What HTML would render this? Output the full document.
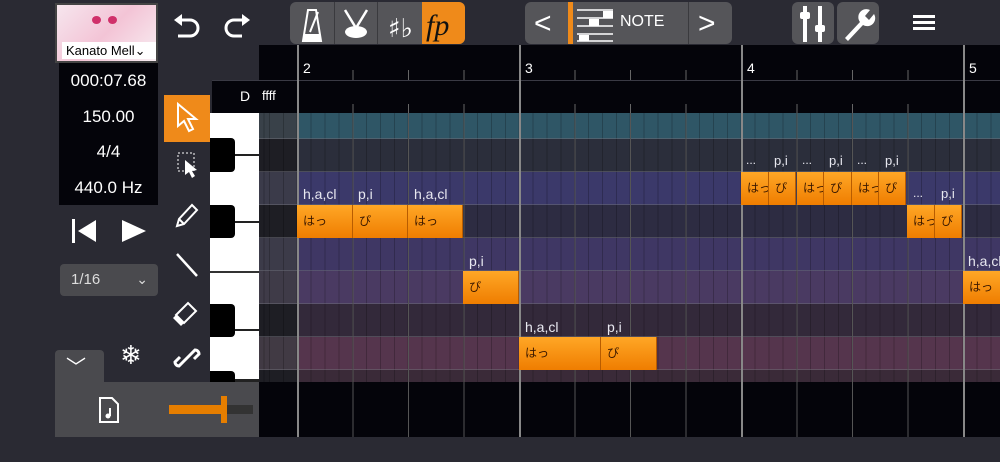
<!DOCTYPE html>
<html><head><meta charset="utf-8"><style>
*{margin:0;padding:0;box-sizing:border-box}
body{width:1000px;height:462px;background:#2a2a33;position:relative;overflow:hidden;font-family:"Liberation Sans","Noto Sans CJK JP",sans-serif;color:#fff}
.a{position:absolute}
.row{position:absolute;left:259px;width:741px}
.n{position:absolute;height:33px;background:linear-gradient(#ffa726,#ef7d00);border-right:1px solid #b85c00;color:#3a1800;font-size:12px;line-height:33px;padding-left:6px;white-space:nowrap;overflow:hidden}
.l{position:absolute;font-size:14px;color:#e8e8f0}
.btn{position:absolute;background:#555559;border-radius:6px}
</style></head><body>
<!-- ruler -->
<div class="a" style="left:259px;top:45px;width:741px;height:68px;background:#04040a"></div>
<div class="a" style="left:212px;top:80px;width:788px;height:1px;background:#3a3a44"></div>
<div class="a" style="left:212px;top:80px;width:1px;height:33px;background:#3a3a44"></div>
<div class="a" style="left:212px;top:81px;width:47px;height:32px;background:#04040a"></div>
<div class="a" style="left:240px;top:88px;font-size:14px">D</div>
<div class="a" style="left:262px;top:88px;font-size:13px">ffff</div>
<div class="a" style="left:297px;top:70px;width:703px;height:10px;background:repeating-linear-gradient(90deg,#666 0 1px,transparent 1px 55.5px)"></div>
<div class="a" style="left:297px;top:104px;width:703px;height:9px;background:repeating-linear-gradient(90deg,#666 0 1px,transparent 1px 55.5px)"></div>
<div class="a" style="left:303px;top:60px;font-size:14px">2</div>
<div class="a" style="left:525px;top:60px;font-size:14px">3</div>
<div class="a" style="left:747px;top:60px;font-size:14px">4</div>
<div class="a" style="left:969px;top:60px;font-size:14px">5</div>
<!-- rows -->
<div class="row" style="top:113px;height:26px;background:#2f5666"></div>
<div class="row" style="top:139px;height:33px;background:#2b2e3b"></div>
<div class="row" style="top:172px;height:33px;background:#3b396a"></div>
<div class="row" style="top:205px;height:33px;background:#2d2c42"></div>
<div class="row" style="top:238px;height:33px;background:#3f3764"></div>
<div class="row" style="top:271px;height:33px;background:#4a3a62"></div>
<div class="row" style="top:304px;height:33px;background:#33293a"></div>
<div class="row" style="top:337px;height:33px;background:#55354d"></div>
<div class="row" style="top:370px;height:12px;background:#3a2a38"></div>
<!-- left gray strip -->
<div class="a" style="left:259px;top:113px;width:38px;height:269px;background:rgba(60,60,66,.8)"></div>
<div class="a" style="left:259px;top:139px;width:38px;height:33px;background:#1e1e24"></div>
<div class="a" style="left:259px;top:205px;width:38px;height:33px;background:#1e1e24"></div>
<div class="a" style="left:259px;top:304px;width:38px;height:33px;background:#1e1e24"></div>
<div class="a" style="left:259px;top:370px;width:38px;height:12px;background:#1e1e24"></div>
<!-- grid lines -->
<div class="a" style="left:259px;top:113px;width:741px;height:269px;background:repeating-linear-gradient(90deg,rgba(0,0,0,.22) 0 1px,transparent 1px 13.875px);background-position:10px 0"></div>
<div class="a" style="left:259px;top:138px;width:741px;height:244px;background:repeating-linear-gradient(180deg,rgba(110,110,120,.5) 0 1px,transparent 1px 33px)"></div>
<div class="a" style="left:297px;top:113px;width:703px;height:269px;background:repeating-linear-gradient(90deg,#555 0 1px,transparent 1px 55.5px)"></div>
<!-- black bottom -->
<div class="a" style="left:259px;top:382px;width:741px;height:55px;background:#04040a"></div>
<div class="a" style="left:297px;top:382px;width:703px;height:55px;background:repeating-linear-gradient(90deg,#555 0 1px,transparent 1px 55.5px)"></div>
<div class="a" style="left:297px;top:45px;width:703px;height:392px;background:repeating-linear-gradient(90deg,#888 0 2px,transparent 2px 222px)"></div>
<!-- piano -->
<div class="a" style="left:210px;top:113px;width:49px;height:269px;background:#fff"></div>
<div class="a" style="left:210px;top:154px;width:49px;height:2px;background:#222"></div>
<div class="a" style="left:210px;top:221px;width:49px;height:2px;background:#222"></div>
<div class="a" style="left:210px;top:271px;width:49px;height:2px;background:#333"></div>
<div class="a" style="left:210px;top:329px;width:49px;height:2px;background:#222"></div>
<div class="a" style="left:210px;top:379px;width:49px;height:3px;background:#222"></div>
<div class="a" style="left:210px;top:138px;width:25px;height:34px;background:#000;border-radius:0 4px 4px 0"></div>
<div class="a" style="left:210px;top:205px;width:25px;height:33px;background:#000;border-radius:0 4px 4px 0"></div>
<div class="a" style="left:210px;top:304px;width:25px;height:33px;background:#000;border-radius:0 4px 4px 0"></div>
<div class="a" style="left:210px;top:371px;width:25px;height:11px;background:#000;border-radius:0 4px 0 0"></div>
<!-- notes -->
<div class="l" style="left:303px;top:186px">h,a,cl</div><div class="l" style="left:358px;top:186px">p,i</div><div class="l" style="left:414px;top:186px">h,a,cl</div>
<div class="n" style="left:297px;top:205px;width:56px">はっ</div><div class="n" style="left:353px;top:205px;width:55px">ぴ</div><div class="n" style="left:408px;top:205px;width:55px">はっ</div>
<div class="l" style="left:469px;top:253px">p,i</div>
<div class="n" style="left:463px;top:271px;width:56px">ぴ</div>
<div class="l" style="left:525px;top:319px">h,a,cl</div><div class="l" style="left:607px;top:319px">p,i</div>
<div class="n" style="left:519px;top:337px;width:82px">はっ</div><div class="n" style="left:601px;top:337px;width:56px">ぴ</div>
<div class="l" style="left:746px;top:153px;font-size:12px">...</div><div class="l" style="left:774px;top:153px;font-size:13px">p,i</div>
<div class="l" style="left:802px;top:153px;font-size:12px">...</div><div class="l" style="left:829px;top:153px;font-size:13px">p,i</div>
<div class="l" style="left:857px;top:153px;font-size:12px">...</div><div class="l" style="left:885px;top:153px;font-size:13px">p,i</div>
<div class="n" style="left:741px;top:172px;width:28px">はっ</div><div class="n" style="left:769px;top:172px;width:27px">ぴ</div>
<div class="n" style="left:797px;top:172px;width:27px">はっ</div><div class="n" style="left:824px;top:172px;width:28px">ぴ</div>
<div class="n" style="left:852px;top:172px;width:27px">はっ</div><div class="n" style="left:879px;top:172px;width:27px">ぴ</div>
<div class="l" style="left:913px;top:186px;font-size:12px">...</div><div class="l" style="left:941px;top:186px;font-size:13px">p,i</div>
<div class="n" style="left:907px;top:205px;width:28px">はっ</div><div class="n" style="left:935px;top:205px;width:27px">ぴ</div>
<div class="l" style="left:968px;top:253px">h,a,cl</div>
<div class="n" style="left:963px;top:271px;width:40px">はっ</div>
<!-- left panel -->
<div class="a" style="left:55px;top:3px;width:103px;height:60px;border:2px solid #444;background:linear-gradient(135deg,#f6e6ee,#f3c4d6 50%,#f8eef2)"></div>
<div class="a" style="left:90px;top:14px;width:30px;height:16px"><span style="position:absolute;left:2px;top:2px;width:9px;height:8px;border-radius:50%;background:#d0306a"></span><span style="position:absolute;left:18px;top:2px;width:9px;height:8px;border-radius:50%;background:#d0306a"></span></div>
<div class="a" style="left:62px;top:42px;width:94px;height:17px;background:#fff;color:#000;font-size:13px;line-height:17px;padding-left:4px">Kanato Mell⌄</div>
<div class="a" style="left:59px;top:63px;width:99px;height:142px;background:#04040a;font-size:17px;text-align:center;line-height:35.5px">000:07.68<br>150.00<br>4/4<br>440.0 Hz</div>
<svg class="a" style="left:70px;top:217px" width="80" height="28"><rect x="2" y="2" width="3" height="24" fill="#fff"/><polygon points="26,3 26,25 8,14" fill="#fff"/><polygon points="52,3 52,25 76,14" fill="#fff"/></svg>
<div class="a" style="left:60px;top:264px;width:98px;height:32px;background:#4a4a4e;border-radius:4px;font-size:15px;line-height:32px;padding-left:11px;color:#ddd">1/16<span style="position:absolute;right:10px;top:-1px;font-size:14px">⌄</span></div>
<!-- tools -->
<div class="a" style="left:164px;top:95px;width:46px;height:47px;background:#ef8a1a"></div>
<svg class="a" style="left:164px;top:95px" width="46" height="47"><path d="M14 9 L14 31 L20 26 L25 36 L29 34 L24 24 L32 24 Z" fill="none" stroke="#fff" stroke-width="2"/></svg>
<svg class="a" style="left:164px;top:145px" width="46" height="40"><rect x="14" y="8" width="16" height="18" fill="none" stroke="#fff" stroke-dasharray="2 2"/><path d="M21 15 L21 30 L25 27 L28 33 L31 31 L28 26 L33 25 Z" fill="#fff"/></svg>
<svg class="a" style="left:164px;top:195px" width="46" height="40"><path d="M13 31 L15 24 L28 10 L33 15 L20 29 Z M15 24 L20 29" fill="none" stroke="#fff" stroke-width="2"/></svg>
<svg class="a" style="left:164px;top:245px" width="46" height="40"><line x1="13" y1="9" x2="33" y2="31" stroke="#fff" stroke-width="2.5"/></svg>
<svg class="a" style="left:164px;top:295px" width="46" height="40"><path d="M12 20 L24 8 L32 16 L20 28 Z" fill="none" stroke="#fff" stroke-width="2"/><path d="M12 20 L20 28 L17 31 L9 23Z" fill="#fff"/></svg>
<div class="a" style="left:120px;top:340px;font-size:26px">❄</div>
<svg class="a" style="left:172px;top:343px" width="30" height="30"><path d="M12 18 L7 23 A4 4 0 0 1 3 19 L8 14 M18 12 L23 7 A4 4 0 0 1 27 11 L22 16 M11 19 L19 11" fill="none" stroke="#fff" stroke-width="3"/></svg>
<!-- bottom panel -->
<div class="a" style="left:55px;top:350px;width:49px;height:35px;background:#4a4a4e;border-radius:4px 4px 0 0"></div>
<div class="a" style="left:66px;top:351px;font-size:20px;color:#fff">﹀</div>
<div class="a" style="left:55px;top:382px;width:204px;height:55px;background:#4a4a4e"></div>
<svg class="a" style="left:98px;top:396px" width="22" height="28"><path d="M2 2 H14 L20 8 V26 H2 Z" fill="none" stroke="#fff" stroke-width="2"/><circle cx="10" cy="20" r="2.5" fill="#fff"/><line x1="12" y1="20" x2="12" y2="12" stroke="#fff" stroke-width="2"/></svg>
<div class="a" style="left:169px;top:405px;width:56px;height:9px;background:#e67e00"></div>
<div class="a" style="left:225px;top:405px;width:28px;height:9px;background:#333"></div>
<div class="a" style="left:221px;top:396px;width:6px;height:27px;background:#e67e00"></div>
<!-- top toolbar -->
<svg class="a" style="left:170px;top:10px" width="80" height="30"><path d="M8 10 H20 A8 8 0 0 1 20 26 H8" fill="none" stroke="#fff" stroke-width="3"/><polygon points="4,10 12,4 12,16" fill="#fff"/><path d="M76 10 H64 A8 8 0 0 0 64 26 H72" fill="none" stroke="#fff" stroke-width="3"/><polygon points="80,10 72,4 72,16" fill="#fff"/></svg>
<div class="btn" style="left:290px;top:2px;width:175px;height:42px"></div>
<div class="a" style="left:334px;top:2px;width:1px;height:42px;background:#3a3a3e"></div>
<div class="a" style="left:377px;top:2px;width:1px;height:42px;background:#3a3a3e"></div>
<div class="a" style="left:422px;top:2px;width:43px;height:42px;background:#ef8a1a;border-radius:0 6px 6px 0"></div>
<svg class="a" style="left:290px;top:2px" width="175" height="42"><path d="M13 39 L18 8 H26 L31 39 Z" fill="none" stroke="#fff" stroke-width="2"/><path d="M13 39 H31 L30 32 H14Z" fill="#fff"/><line x1="20" y1="30" x2="28" y2="10" stroke="#fff" stroke-width="2"/><ellipse cx="66" cy="30" rx="11" ry="6" fill="#fff"/><line x1="55" y1="8" x2="66" y2="26" stroke="#fff" stroke-width="2.5"/><line x1="77" y1="8" x2="66" y2="26" stroke="#fff" stroke-width="2.5"/><text x="98" y="35" font-size="26" fill="#fff" font-family="DejaVu Sans">♯♭</text><text x="136" y="33" font-size="30" fill="#111" font-style="italic" font-family="Liberation Serif">fp</text></svg>
<div class="btn" style="left:525px;top:2px;width:207px;height:42px"></div>
<div class="a" style="left:568px;top:2px;width:5px;height:42px;background:#ef8a1a"></div>
<div class="a" style="left:688px;top:2px;width:1px;height:42px;background:#3a3a3e"></div>
<div class="a" style="left:534px;top:7px;font-size:30px;color:#fff;font-weight:lighter">&lt;</div>
<div class="a" style="left:698px;top:7px;font-size:30px;color:#fff;font-weight:lighter">&gt;</div>
<svg class="a" style="left:575px;top:6px" width="40" height="36"><g fill="none" stroke="#fff" stroke-width="1.5"><line x1="2" y1="4" x2="38" y2="4"/><line x1="2" y1="12" x2="38" y2="12"/><line x1="2" y1="20" x2="38" y2="20"/><line x1="2" y1="28" x2="38" y2="28"/><line x1="2" y1="35" x2="38" y2="35"/></g><rect x="28" y="5" width="10" height="7" fill="#fff"/><rect x="14" y="13" width="10" height="7" fill="#fff"/><rect x="4" y="29" width="10" height="6" fill="#fff"/></svg>
<div class="a" style="left:620px;top:13px;font-size:16px">NOTE</div>
<div class="btn" style="left:792px;top:2px;width:42px;height:42px"></div>
<div class="btn" style="left:837px;top:2px;width:42px;height:42px"></div>
<svg class="a" style="left:792px;top:2px" width="90" height="42"><rect x="11" y="4" width="4" height="36" fill="#fff"/><rect x="8" y="10" width="10" height="7" rx="2" fill="#fff"/><rect x="26" y="4" width="4" height="36" fill="#fff"/><rect x="23" y="23" width="10" height="7" rx="2" fill="#fff"/><path d="M53 36 L68 20 A8 8 0 0 1 78 8 L73 14 L77 18 L82 12 A8 8 0 0 1 71 23 L56 39 Z" fill="#fff"/></svg>
<div class="a" style="left:913px;top:15px;width:22px;height:3px;background:#fff"></div>
<div class="a" style="left:913px;top:21px;width:22px;height:3px;background:#fff"></div>
<div class="a" style="left:913px;top:27px;width:22px;height:3px;background:#fff"></div>
</body></html>
